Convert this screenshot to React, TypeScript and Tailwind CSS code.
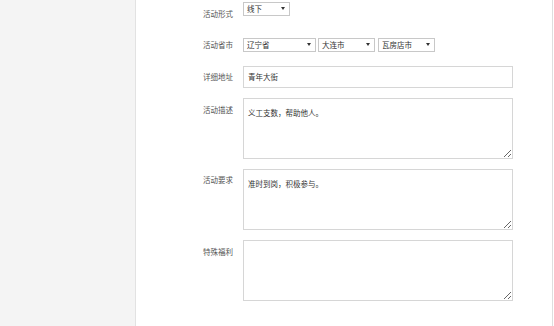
import React from "react";

const font = "font-['Noto_Sans_CJK_SC','Noto_Sans',sans-serif]";

type SelectProps = { value: string; width: string };

function FakeSelect({ value, width }: SelectProps) {
  return (
    <div
      className={`relative flex h-[14px] items-center border border-[#c8c8c8] bg-white pl-[3px] text-[7.5px] leading-none text-[#333] ${width}`}
    >
      <span>{value}</span>
      <span className="absolute right-[4px] top-[4px] h-0 w-0 border-x-[2px] border-t-[3px] border-x-transparent border-t-[#333]" />
    </div>
  );
}

function Label({ children, className = "" }: { children: React.ReactNode; className?: string }) {
  return (
    <div className={`w-[97px] shrink-0 text-right text-[7.5px] leading-[10px] text-[#555] ${className}`}>
      {children}
    </div>
  );
}

function Area({ text }: { text?: string }) {
  return (
    <textarea
      readOnly
      defaultValue={text ?? ""}
      className="block h-[61px] w-[270px] border border-[#d6d6d6] bg-white px-[4px] pt-[9px] text-[7.5px] leading-[10px] text-[#333] outline-none"
    />
  );
}

export default function App() {
  return (
    <div className={`flex h-[326px] w-[554px] overflow-hidden bg-white ${font}`}>
      <aside className="h-full w-[136px] shrink-0 border-r border-[#e2e2e2] bg-[#f4f4f4]" />
      <main className="flex h-full w-[417px] shrink-0 flex-col border-r border-[#dedede] bg-white">
        <div className="mt-[2px] flex h-[14px] items-start gap-[10px]">
          <Label className="mt-[7px]">活动形式</Label>
          <FakeSelect value="线下" width="w-[47px]" />
        </div>

        <div className="mt-[22px] flex items-center gap-[10px]">
          <Label>活动省市</Label>
          <div className="flex gap-[2px]">
            <FakeSelect value="辽宁省" width="w-[73px]" />
            <FakeSelect value="大连市" width="w-[57px]" />
            <div className="ml-[1px]">
              <FakeSelect value="瓦房店市" width="w-[57px]" />
            </div>
          </div>
        </div>

        <div className="mt-[14px] flex items-center gap-[10px]">
          <Label>详细地址</Label>
          <div className="flex h-[22px] w-[270px] items-center border border-[#d6d6d6] bg-white px-[4px] text-[7.5px] text-[#333]">
            青年大街
          </div>
        </div>

        <div className="mt-[10px] flex items-start gap-[10px]">
          <Label className="mt-[7px]">活动描述</Label>
          <Area text="义工支数，帮助他人。" />
        </div>

        <div className="mt-[10px] flex items-start gap-[10px]">
          <Label className="mt-[6px]">活动要求</Label>
          <Area text="准时到岗，积极参与。" />
        </div>

        <div className="mt-[10px] flex items-start gap-[10px]">
          <Label className="mt-[7px]">特殊福利</Label>
          <Area />
        </div>
      </main>
      <div className="flex-1 bg-white" />
    </div>
  );
}
